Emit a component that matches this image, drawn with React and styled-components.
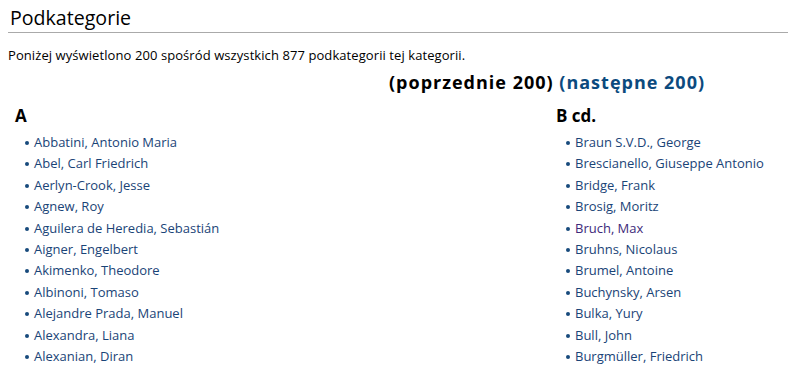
import React from 'react';
import styled, { createGlobalStyle } from 'styled-components';

const Global = createGlobalStyle`
  body {
    margin: 0;
    background: #fff;
    font-family: "Open Sans", "Liberation Sans", Arial, sans-serif;
    color: #000;
  }
`;

const Page = styled.div`
  padding: 4px 0 0 8px;
`;

const Title = styled.h2`
  margin: 0;
  font-size: 19.6px;
  font-weight: normal;
  line-height: 28px;
  padding-left: 2px;
  border-bottom: 1px solid #aaa;
`;

const Intro = styled.p`
  margin: 12px 0 0;
  font-size: 13px;
  letter-spacing: 0.08px;
  line-height: 20px;
`;

const Pager = styled.div`
  margin-top: 5px;
  padding-left: 381px;
  font-size: 18px;
  font-weight: bold;
  letter-spacing: 1px;
  line-height: 24px;
`;

const PagerLink = styled.a`
  color: ${p => (p.$active ? '#0b4a7e' : '#000')};
  text-decoration: none;
`;

const Columns = styled.div`
  display: grid;
  grid-template-columns: 541px 1fr;
  margin-top: 11px;
`;

const Letter = styled.h3`
  margin: 0 0 5px;
  padding-left: 7px;
  font-size: 17px;
  font-weight: bold;
  line-height: 22px;
`;

const List = styled.ul`
  margin: 0;
  padding-left: 26px;
  list-style: none;
`;

const Item = styled.li`
  position: relative;
  font-size: 13px;
  line-height: 21.4px;
  &::before {
    content: '';
    position: absolute;
    left: -9px;
    top: 9px;
    width: 4px;
    height: 4px;
    border-radius: 50%;
    background: #174a7c;
  }
`;

const Link = styled.a`
  color: ${p => (p.$visited ? '#3d2a7a' : '#1a4477')};
  text-decoration: none;
`;

const colA = [
  'Abbatini, Antonio Maria',
  'Abel, Carl Friedrich',
  'Aerlyn-Crook, Jesse',
  'Agnew, Roy',
  'Aguilera de Heredia, Sebastián',
  'Aigner, Engelbert',
  'Akimenko, Theodore',
  'Albinoni, Tomaso',
  'Alejandre Prada, Manuel',
  'Alexandra, Liana',
  'Alexanian, Diran',
];

const colB = [
  'Braun S.V.D., George',
  'Brescianello, Giuseppe Antonio',
  'Bridge, Frank',
  'Brosig, Moritz',
  'Bruch, Max',
  'Bruhns, Nicolaus',
  'Brumel, Antoine',
  'Buchynsky, Arsen',
  'Bulka, Yury',
  'Bull, John',
  'Burgmüller, Friedrich',
];

function Group(props) {
  return (
    <div>
      <Letter>{props.letter}</Letter>
      <List>
        {props.items.map(x => (
          <Item key={x}>
            <Link href="#" $visited={x === 'Bruch, Max'}>{x}</Link>
          </Item>
        ))}
      </List>
    </div>
  );
}

export default function App() {
  return (
    <Page>
      <Global />
      <Title>Podkategorie</Title>
      <Intro>Poniżej wyświetlono 200 spośród wszystkich 877 podkategorii tej kategorii.</Intro>
      <Pager>
        <PagerLink>(poprzednie 200)</PagerLink>{' '}
        <PagerLink href="#" $active>(następne 200)</PagerLink>
      </Pager>
      <Columns>
        <Group letter="A" items={colA} />
        <Group letter="B cd." items={colB} />
      </Columns>
    </Page>
  );
}
